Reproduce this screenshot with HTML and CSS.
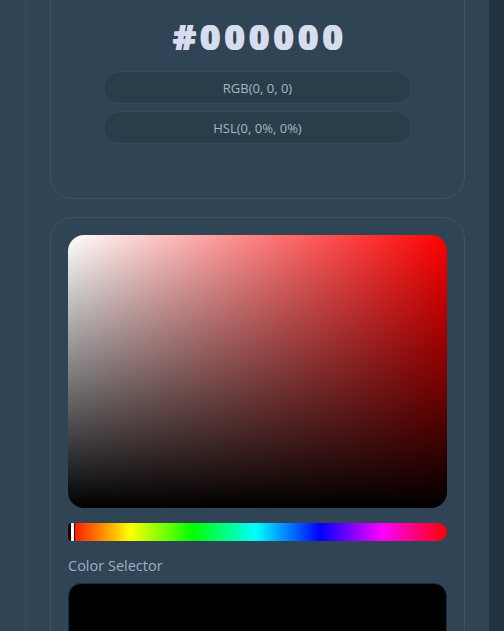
FILE: index.html
```html
<!DOCTYPE html>
<html lang="en">
<head>
<meta charset="utf-8">
<title>Color Picker</title>
<link rel="stylesheet" href="styles.css">
</head>
<body>
<div class="page">
  <main class="panel">
    <section class="card card-preview">
      <h1 class="hex">#000000</h1>
      <div class="pill">RGB(0, 0, 0)</div>
      <div class="pill">HSL(0, 0%, 0%)</div>
    </section>
    <section class="card card-picker">
      <div class="sv-area"></div>
      <div class="hue-bar">
        <span class="hue-thumb"></span>
      </div>
      <label class="field-label">Color Selector</label>
      <div class="swatch"></div>
    </section>
  </main>
  <aside class="side"></aside>
</div>
</body>
</html>
```
FILE: styles.css
```css
* { box-sizing: border-box; }
html, body {
  margin: 0;
  padding: 0;
  height: 100%;
  overflow: hidden;
  background: #2f4454;
  font-family: "Open Sans", "Noto Sans", sans-serif;
}
.page {
  display: flex;
  height: 100%;
}
.panel {
  width: 464px;
  margin-left: 25px;
  border-left: 1px solid #3a5062;
  padding: 0 24px;
  display: flex;
  flex-direction: column;
  gap: 18px;
}
.side {
  flex: 1;
  background: #213240;
}
.card {
  border: 1px solid #3c5363;
  border-radius: 22px;
}
.card-preview {
  margin-top: -53px;
  padding: 69px 0 54px;
  display: flex;
  flex-direction: column;
  align-items: center;
  gap: 7px;
  flex-shrink: 0;
}
.hex {
  margin: 0 0 7px;
  font-size: 35px;
  line-height: 40px;
  font-weight: 800;
  letter-spacing: 4px;
  color: #d5def0;
  padding-left: 4px;
  text-shadow: 1px 0 0 #d5def0, -0.5px 0 0 #8a6a50;
}
.pill {
  width: 309px;
  height: 33px;
  border-radius: 17px;
  background: #2a3d4b;
  border: 1px solid #374c5b;
  color: #a6b6c4;
  font-size: 13px;
  display: flex;
  align-items: center;
  justify-content: center;
}
.card-picker {
  padding: 17px 17px 0;
  flex-shrink: 0;
  display: flex;
  flex-direction: column;
}
.sv-area {
  height: 273px;
  border-radius: 16px;
  background:
    linear-gradient(to bottom, rgba(0,0,0,0), #000),
    linear-gradient(to right, #fff, rgba(255,255,255,0)),
    #ff0000;
}
.hue-bar {
  position: relative;
  margin-top: 15px;
  height: 18px;
  border-radius: 9px;
  background: linear-gradient(to right, #f00 0%, #ff0 16.5%, #0f0 33%, #0ff 49.5%, #00f 66.5%, #f0f 83%, #f00 100%);
}
.hue-thumb {
  position: absolute;
  left: 3px;
  top: 0;
  width: 3px;
  height: 18px;
  background: #fff;
  box-shadow: -1px 0 0 #000, 1px 0 0 #300;
}
.hue-bar::before {
  content: "";
  position: absolute;
  left: 0;
  top: 0;
  width: 4px;
  height: 18px;
  border-radius: 9px 0 0 9px;
  background: #2a0000;
}
.field-label {
  margin-top: 14px;
  font-size: 14.5px;
  line-height: 22px;
  color: #9db1c2;
}
.swatch {
  margin-top: 6px;
  height: 80px;
  border-radius: 13px;
  background: #000;
  border: 1px solid #1f2d38;
}
```
